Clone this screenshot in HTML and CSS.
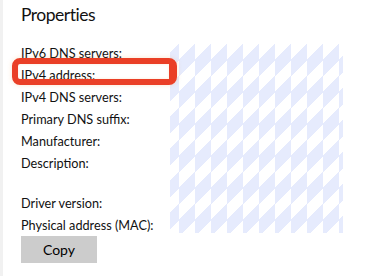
FILE: index.html
```html
<!DOCTYPE html>
<html lang="en">
<head>
  <meta charset="UTF-8" />
  <meta name="viewport" content="width=device-width, initial-scale=1.0"/>
  <title>Properties</title>
  <link rel="stylesheet" href="styles.css">
</head>
<body>

  <div class="panel">
    <h2 class="title">Properties</h2>

    <div class="props">
      <div class="row">IPv6 DNS servers:</div>
      <div class="row">IPv4 address:</div>
      <div class="row">IPv4 DNS servers:</div>
      <div class="row">Primary DNS suffix:</div>
      <div class="row">Manufacturer:</div>
      <div class="row">Description:</div>
      <div class="spacer"></div>
      <div class="row">Driver version:</div>
      <div class="row">Physical address (MAC):</div>
    </div>

    <button class="copy" type="button">Copy</button>

    <!-- values are hidden behind the redaction pattern -->
    <div class="redact"></div>
    <div class="highlight"></div>
  </div>

</body>
</html>
```

FILE: styles.css
```css
body {
  margin: 0;
  background: #ffffff;
  font-family: 'Lato', 'Noto Sans', sans-serif;
  color: #111111;
}

.panel {
  position: relative;
  height: 276px;
  padding: 2px 0 0 18px;
  border-left: 3px solid #f1f1f1;
  box-sizing: border-box;
}

.title {
  margin: 0 0 14px 0;
  font-size: 17.5px;
  font-weight: normal;
  letter-spacing: -0.5px;
  line-height: 26px;
}

.row {
  font-size: 12.7px;
  line-height: 22px;
  height: 22px;
}

.spacer {
  height: 18px;
}

.copy {
  display: block;
  width: 76px;
  height: 27px;
  padding: 0;
  border: none;
  background: #cccccc;
  color: #000000;
  font-family: inherit;
  font-size: 14px;
}

.redact {
  position: absolute;
  left: 167px;
  top: 44px;
  width: 173px;
  height: 189px;
  background-image: linear-gradient(135deg, transparent 33.33%, #e6ebfd 33.33%, #e6ebfd 66.67%, transparent 66.67%);
  background-size: 16px 32px;
  background-position: 9px 0;
}

.highlight {
  position: absolute;
  left: 9px;
  top: 58px;
  width: 151px;
  height: 15px;
  border: 6px solid #ea3f26;
  border-right-width: 8px;
  border-radius: 8px;
  box-shadow: 0 0 5px rgba(245, 150, 60, 0.25), inset 0 0 3px rgba(245, 150, 60, 0.2);
}
```
